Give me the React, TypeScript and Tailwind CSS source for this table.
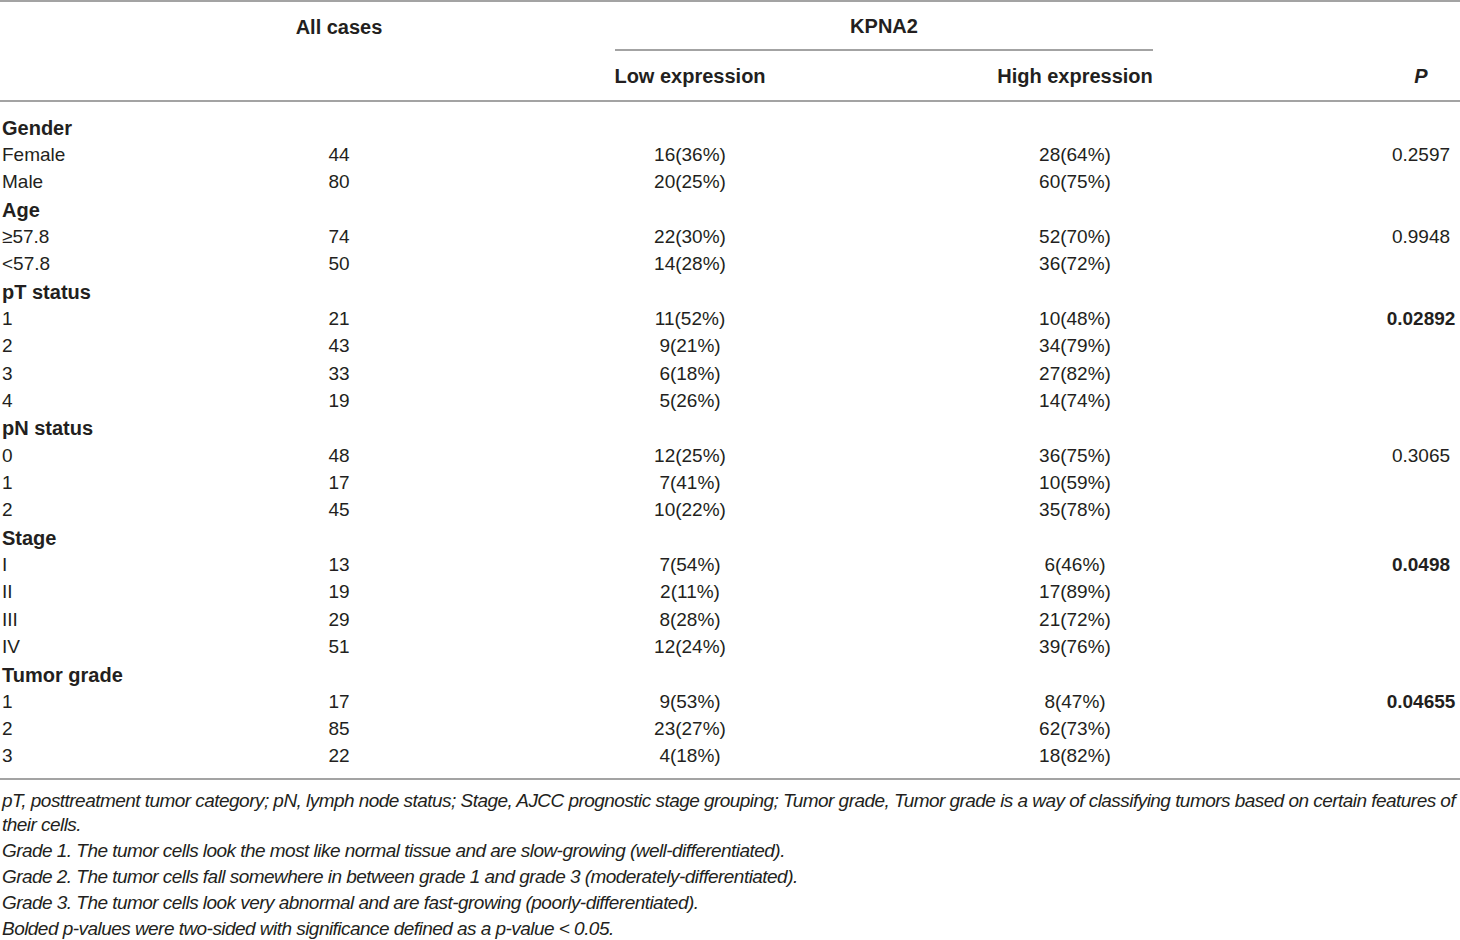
import React from 'react';

type Row =
    | { head: string }
    | { label: string; all: string; low: string; high: string; p?: string; bold?: boolean };

const rows: Row[] = [
    { head: 'Gender' },
    { label: 'Female', all: '44', low: '16(36%)', high: '28(64%)', p: '0.2597' },
    { label: 'Male', all: '80', low: '20(25%)', high: '60(75%)' },
    { head: 'Age' },
    { label: '≥57.8', all: '74', low: '22(30%)', high: '52(70%)', p: '0.9948' },
    { label: '<57.8', all: '50', low: '14(28%)', high: '36(72%)' },
    { head: 'pT status' },
    { label: '1', all: '21', low: '11(52%)', high: '10(48%)', p: '0.02892', bold: true },
    { label: '2', all: '43', low: '9(21%)', high: '34(79%)' },
    { label: '3', all: '33', low: '6(18%)', high: '27(82%)' },
    { label: '4', all: '19', low: '5(26%)', high: '14(74%)' },
    { head: 'pN status' },
    { label: '0', all: '48', low: '12(25%)', high: '36(75%)', p: '0.3065' },
    { label: '1', all: '17', low: '7(41%)', high: '10(59%)' },
    { label: '2', all: '45', low: '10(22%)', high: '35(78%)' },
    { head: 'Stage' },
    { label: 'I', all: '13', low: '7(54%)', high: '6(46%)', p: '0.0498', bold: true },
    { label: 'II', all: '19', low: '2(11%)', high: '17(89%)' },
    { label: 'III', all: '29', low: '8(28%)', high: '21(72%)' },
    { label: 'IV', all: '51', low: '12(24%)', high: '39(76%)' },
    { head: 'Tumor grade' },
    { label: '1', all: '17', low: '9(53%)', high: '8(47%)', p: '0.04655', bold: true },
    { label: '2', all: '85', low: '23(27%)', high: '62(73%)' },
    { label: '3', all: '22', low: '4(18%)', high: '18(82%)' },
];

export default function App() {
    return (
        <div className="h-[940px] w-[1460px] overflow-hidden bg-white font-['Liberation_Sans',Arial,sans-serif] text-[19px] text-[#231f20]">
            {/* Kopfzeile */}
            <div className="border-t-2 border-b-2 border-[#a3a3a3]">
                <div className="flex h-[49px] items-center text-[20px] font-bold">
                    <div className="w-[270px]" />
                    <div className="w-[138px] text-center whitespace-nowrap">All cases</div>
                    <div className="ml-[207px] flex h-[49px] w-[538px] items-center justify-center border-b-2 border-[#a3a3a3]">
                        KPNA2
                    </div>
                </div>
                <div className="flex h-[49px] items-center text-[20px] font-bold">
                    <div className="w-[270px]" />
                    <div className="w-[138px]" />
                    <div className="ml-[204px] w-[156px] text-center whitespace-nowrap">Low expression</div>
                    <div className="ml-[229px] w-[156px] text-center whitespace-nowrap">High expression</div>
                    <div className="ml-[229px] w-[78px] text-center italic">P</div>
                </div>
            </div>

            {/* Daten */}
            <div className="border-b-2 border-[#a3a3a3] pt-[12px] pb-[8px]">
                {rows.map((r, i) =>
                    'head' in r ? (
                        <div key={i} className="flex h-[27.35px] items-center pl-[2px] text-[20px] font-bold">
                            {r.head}
                        </div>
                    ) : (
                        <div key={i} className="flex h-[27.35px] items-center">
                            <div className="w-[270px] pl-[2px]">{r.label}</div>
                            <div className="w-[138px] text-center">{r.all}</div>
                            <div className="ml-[204px] w-[156px] text-center">{r.low}</div>
                            <div className="ml-[229px] w-[156px] text-center">{r.high}</div>
                            <div className={'ml-[229px] w-[78px] text-center ' + (r.bold ? 'font-bold' : '')}>
                                {r.p ?? ''}
                            </div>
                        </div>
                    )
                )}
            </div>

            {/* Fußnoten */}
            <div className="pt-[9px] pl-[2px] text-[19px] tracking-[-0.54px] italic">
                <p className="leading-[24px]">
                    <span className="whitespace-nowrap">
                        pT, posttreatment tumor category; pN, lymph node status; Stage, AJCC prognostic stage grouping; Tumor grade, Tumor grade is a way of classifying tumors based on certain features of
                    </span>
                    <br />
                    their cells.
                </p>
                <p className="mt-[1px] leading-[26px]">
                    Grade 1. The tumor cells look the most like normal tissue and are slow-growing (well-differentiated).
                </p>
                <p className="leading-[26px]">
                    Grade 2. The tumor cells fall somewhere in between grade 1 and grade 3 (moderately-differentiated).
                </p>
                <p className="leading-[26px]">
                    Grade 3. The tumor cells look very abnormal and are fast-growing (poorly-differentiated).
                </p>
                <p className="leading-[25px]">Bolded p-values were two-sided with significance defined as a p-value &lt; 0.05.</p>
            </div>
        </div>
    );
}
